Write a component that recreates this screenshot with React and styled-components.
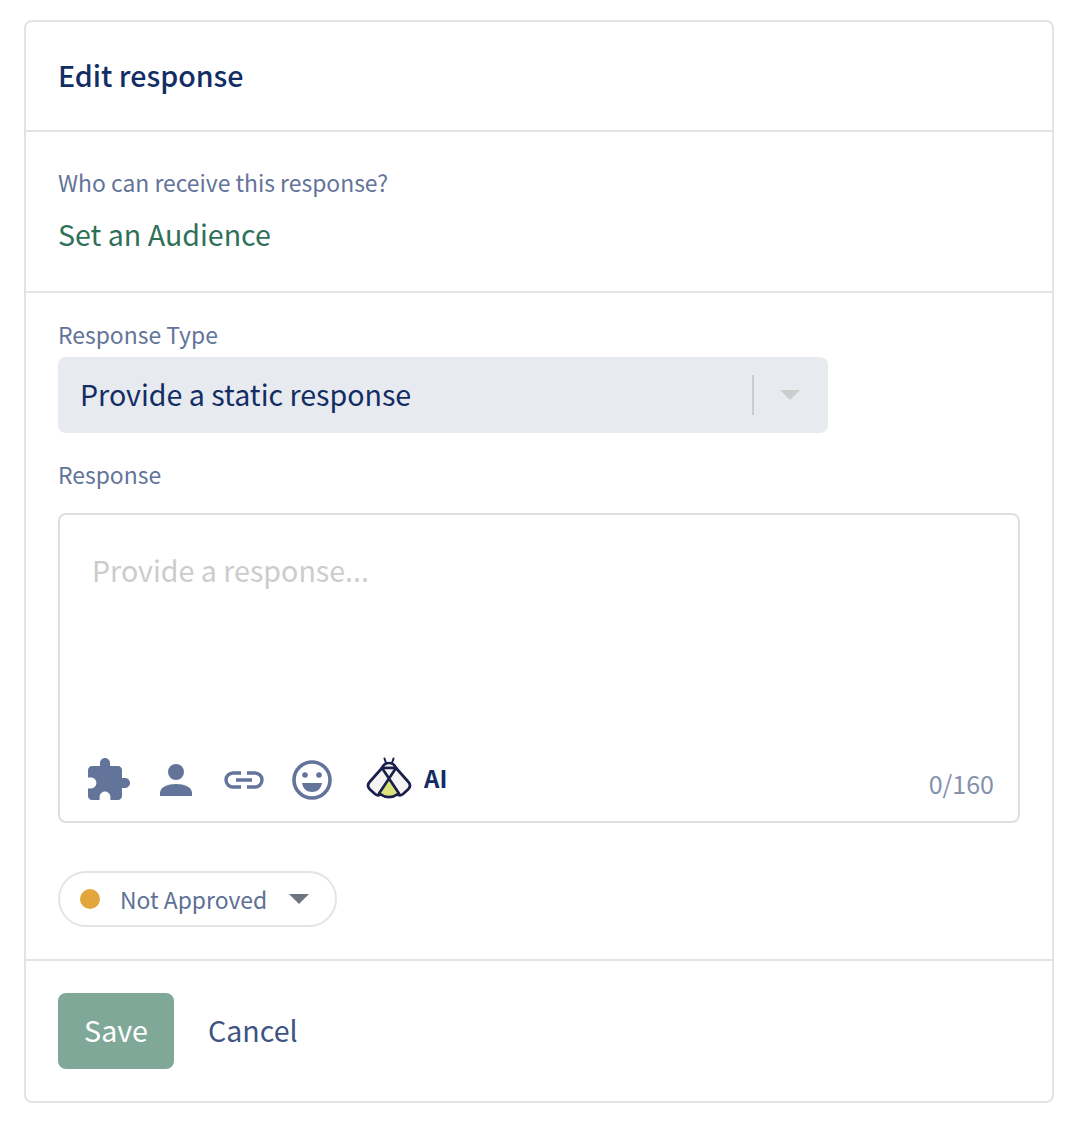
import styled, { createGlobalStyle } from "styled-components";

const GlobalStyle = createGlobalStyle`
  body {
    margin: 0;
    background: #fff;
    font-family: "Noto Sans CJK SC", "Noto Sans", sans-serif;
  }
`;

const Page = styled.div`
  padding: 20px 28px 0 24px;
`;

const Card = styled.section`
  border: 2px solid #e3e3e3;
  border-radius: 8px;
  height: 1083px;
  box-sizing: border-box;
  display: flex;
  flex-direction: column;
`;

const Header = styled.header`
  height: 110px;
  box-sizing: border-box;
  padding: 0 32px;
  display: flex;
  align-items: center;
  border-bottom: 2px solid #e3e3e3;
`;

const Title = styled.h2`
  margin: 0;
  font-size: 28.6px;
  line-height: 40px;
  font-weight: 500;
  color: #122d64;
  position: relative;
  top: -1px;
`;

const AudienceSection = styled.div`
  height: 161px;
  box-sizing: border-box;
  padding: 34px 32px 0;
  border-bottom: 2px solid #e3e3e3;
`;

const Label = styled.div`
  font-size: 22.9px;
  line-height: 32px;
  color: #63749a;
`;

const AudienceLink = styled.a`
  display: block;
  margin-top: 16px;
  font-size: 28.6px;
  line-height: 40px;
  color: #2f7059;
`;

const ResponseSection = styled.div`
  flex: 1;
  padding: 25px 32px 0;
  border-bottom: 2px solid #e3e3e3;
`;

const Select = styled.div`
  margin-top: 7px;
  width: 770px;
  height: 76px;
  background: #e7eaef;
  border-radius: 8px;
  display: flex;
  align-items: center;
  padding-left: 22px;
  box-sizing: border-box;
`;

const SelectValue = styled.span`
  flex: 1;
  font-size: 28.6px;
  line-height: 40px;
  padding-bottom: 2px;
  color: #122d64;
`;

const SelectDivider = styled.span`
  width: 2px;
  height: 40px;
  background: #cccccc;
`;

const SelectArrow = styled.span`
  width: 0;
  height: 0;
  margin: 0 28px 0 26px;
  border-left: 10px solid transparent;
  border-right: 10px solid transparent;
  border-top: 10px solid #cccccc;
`;

const ResponseLabel = styled(Label)`
  margin-top: 25px;
`;

const Editor = styled.div`
  margin-top: 23px;
  height: 310px;
  box-sizing: border-box;
  border: 2px solid #dcdfe3;
  border-radius: 8px;
  padding: 35px 24px 0 32px;
  display: flex;
  flex-direction: column;
`;

const Placeholder = styled.div`
  flex: 1;
  font-size: 28.6px;
  line-height: 40px;
  color: #cccccc;
`;

const Toolbar = styled.div`
  display: flex;
  align-items: center;
  height: 44px;
  margin-bottom: 19px;
  margin-left: -8px;
`;

const ToolIcon = styled.svg`
  display: block;
  flex: none;
  margin-right: ${(p) => p.$gap}px;
  fill: #63749a;
`;

const BeeIcon = styled.svg`
  display: block;
  flex: none;
  position: relative;
  top: -2px;
`;

const AiLabel = styled.span`
  margin-left: 12px;
  font-size: 24px;
  font-weight: 700;
  color: #122d64;
  position: relative;
  top: -3px;
`;

const Counter = styled.span`
  margin-left: auto;
  font-size: 25px;
  color: #8592ad;
  position: relative;
  top: 3px;
`;

const StatusPill = styled.div`
  margin-top: 48px;
  width: 279px;
  height: 56px;
  box-sizing: border-box;
  border: 2px solid #e1e4e9;
  border-radius: 28px;
  display: flex;
  align-items: center;
  padding-left: 20px;
`;

const StatusDot = styled.span`
  width: 20px;
  height: 20px;
  border-radius: 50%;
  background: #e3a63c;
`;

const StatusText = styled.span`
  margin-left: 20px;
  font-size: 22.9px;
  color: #5d7096;
`;

const StatusArrow = styled.span`
  margin-left: 22px;
  width: 0;
  height: 0;
  border-left: 10px solid transparent;
  border-right: 10px solid transparent;
  border-top: 10px solid #6e7580;
`;

const Footer = styled.footer`
  height: 140px;
  box-sizing: border-box;
  padding: 32px 32px 0;
  display: flex;
  align-items: flex-start;
`;

const SaveButton = styled.button`
  width: 116px;
  height: 76px;
  border: 0;
  border-radius: 8px;
  padding: 0 0 4px;
  background: #7fa898;
  color: #fff;
  font-family: inherit;
  font-size: 28.6px;
`;

const CancelButton = styled.button`
  margin-left: 34px;
  height: 76px;
  border: 0;
  padding: 0 0 4px;
  background: none;
  color: #3d5382;
  font-family: inherit;
  font-size: 28.6px;
`;

function BeeLogo() {
  const line = { stroke: "#1b1f4b", strokeWidth: 2.7, strokeLinejoin: "round", strokeLinecap: "round" };
  return (
    <BeeIcon width="46" height="42" viewBox="0 0 46 42">
      <path d="M20 6 18.500 1.500M26 6 27.500 1.500" {...line} strokeWidth="2" fill="none" />
      <path d="M16 11c1.500-3.500 4-5 7-5s5.500 1.500 7 5z" fill="#f5f4f2" {...line} />
      {/* wings: one outline, tips rounded wide */}
      <path d="M16 11 4 24.500Q0 28.500 4 32.500L9 37Q12 39.500 15 37.500 18.500 40 23 40T31 37.500Q34 39.500 37 37L42 32.500Q46 28.500 42 24.500L30 11z" fill="#f5f4f2" {...line} />
      <path d="M23 21.500 14 35.500q4 4.500 9 4.500t9-4.500z" fill="#dde27a" />
      <path d="M16 11 33 36.500M30 11 13 36.500" {...line} fill="none" />
      <path d="M15 37.500q3.500 2.500 8 2.500t8-2.500" {...line} fill="none" />
    </BeeIcon>
  );
}

export default function App() {
  return (
    <Page>
      <GlobalStyle />
      <Card>
        <Header>
          <Title>Edit response</Title>
        </Header>
        <AudienceSection>
          <Label>Who can receive this response?</Label>
          <AudienceLink>Set an Audience</AudienceLink>
        </AudienceSection>
        <ResponseSection>
          <Label>Response Type</Label>
          <Select>
            <SelectValue>Provide a static response</SelectValue>
            <SelectDivider />
            <SelectArrow />
          </Select>
          <ResponseLabel>Response</ResponseLabel>
          <Editor>
            <Placeholder>Provide a response...</Placeholder>
            <Toolbar>
              <ToolIcon $gap={28} width="48" height="48" viewBox="0 0 24 24">
                <path d="M20.5 11H19V7c0-1.100-.9-2-2-2h-4V3.500C13 2.120 11.880 1 10.500 1S8 2.120 8 3.500V5H4c-1.100 0-1.990.9-1.990 2v3.800H3.500c1.490 0 2.700 1.210 2.700 2.700s-1.210 2.700-2.700 2.700H2V20c0 1.100.9 2 2 2h3.800v-1.500c0-1.490 1.210-2.700 2.700-2.700 1.490 0 2.700 1.210 2.700 2.700V22H17c1.100 0 2-.9 2-2v-4h1.500c1.380 0 2.500-1.120 2.500-2.500S21.880 11 20.500 11z" />
              </ToolIcon>
              <ToolIcon $gap={32} width="32" height="32" viewBox="0 0 32 32">
                <circle cx="16" cy="8" r="8" />
                <path d="M0 32v-3c0-6 8-9 16-9s16 3 16 9v3z" />
              </ToolIcon>
              <ToolIcon $gap={28} width="40" height="20" viewBox="0 0 40 20">
                <path d="M17 3h-8a7 7 0 0 0 0 14h8M23 3h8a7 7 0 0 1 0 14h-8M12 10h16" fill="none" stroke="#63749a" strokeWidth="3.400" />
              </ToolIcon>
              <ToolIcon $gap={34} width="40" height="40" viewBox="0 0 40 40">
                <circle cx="20" cy="20" r="18" fill="none" stroke="#63749a" strokeWidth="3.600" />
                <circle cx="13" cy="15" r="2.800" />
                <circle cx="27" cy="15" r="2.800" />
                <path d="M10 23h20c-1 6-5 9-10 9s-9-3-10-9z" />
              </ToolIcon>
              <BeeLogo />
              <AiLabel>AI</AiLabel>
              <Counter>0/160</Counter>
            </Toolbar>
          </Editor>
          <StatusPill>
            <StatusDot />
            <StatusText>Not Approved</StatusText>
            <StatusArrow />
          </StatusPill>
        </ResponseSection>
        <Footer>
          <SaveButton>Save</SaveButton>
          <CancelButton>Cancel</CancelButton>
        </Footer>
      </Card>
    </Page>
  );
}
